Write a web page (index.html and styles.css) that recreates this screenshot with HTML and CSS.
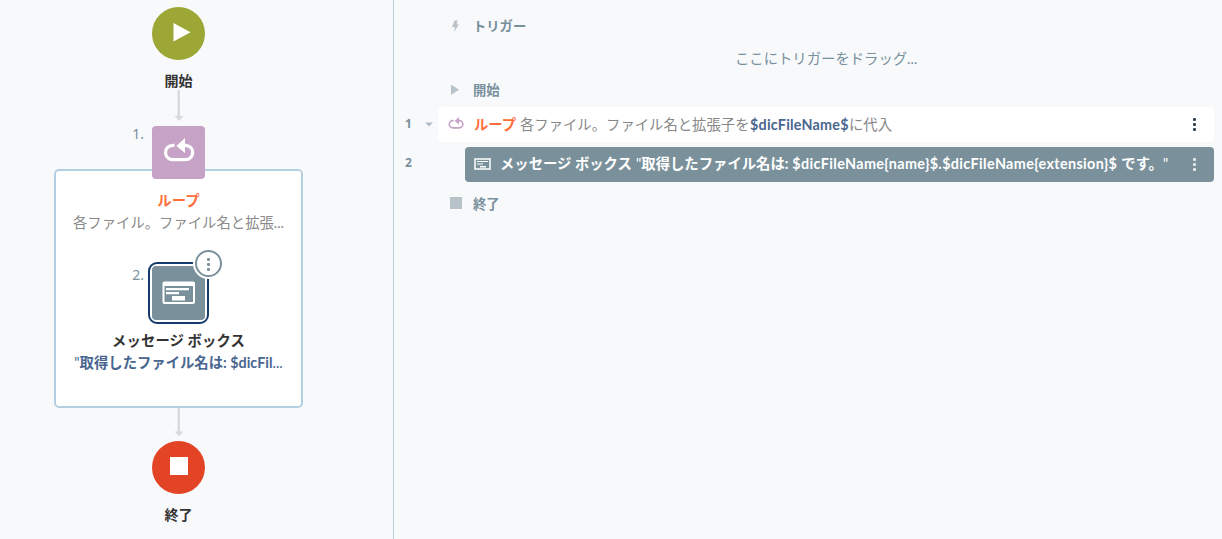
FILE: index.html
```html
<!DOCTYPE html>
<html lang="ja">
<head>
<meta charset="utf-8">
<title>フロー</title>
<link rel="stylesheet" href="styles.css">
</head>
<body>
<svg class="defs" width="0" height="0">
  <symbol id="loop" viewBox="0 0 32 26">
    <path d="M11.500 7.300H9.700a7.200 7.200 0 0 0 0 14.400h12.800a7.200 7.200 0 0 0 0-14.400H20" fill="none" stroke="currentColor" stroke-width="3.200"/>
    <path d="M13.300 8 22 0v15z" fill="currentColor"/>
  </symbol>
</svg>
<main class="app">
  <section class="diagram">
    <div class="flow">
      <div class="circle start"><svg width="53" height="53"><path d="M21.500 16v18.500l17-9.300z" fill="#fff"/></svg></div>
      <div class="caption">開始</div>
      <svg class="arrow" width="10" height="31"><path d="M3.500 0h2.500v26h3.500L5 31 .5 26h3z" fill="#d8dadc"/></svg>
      <div class="tile loop"><span class="num">1.</span><svg width="32" height="26"><use href="#loop"/></svg></div>
      <div class="group">
        <div class="title orange"><span>ループ</span></div>
        <div class="desc"><span class="d1">各ファイル。ファイル名と拡張...</span></div>
        <div class="selected">
          <span class="num">2.</span>
          <div class="tile message"><svg width="33" height="24"><rect x="1.500" y="1.500" width="30.500" height="20.500" rx="1" fill="none" stroke="#fff" stroke-width="2"/><path d="M1 1h31v4H1zM4 7h23v2.300H4zM4 11h13v2.300H4zM10 15h13v4.500H10z" fill="#fff"/></svg></div>
          <div class="menu"><i></i><i></i><i></i></div>
        </div>
        <div class="title"><span>メッセージ ボックス</span></div>
        <div class="desc var"><span class="q">"</span><span>取得したファイル名は:</span> <span>$dicFil</span><span class="q">...</span></div>
      </div>
      <svg class="arrow lower" width="10" height="28"><path d="M3.500 0h2.500v23.500h3.500L5 28 .5 23.500h3z" fill="#d8dadc"/></svg>
      <div class="circle stop"><svg width="53" height="53"><path d="M18 16h18v18H18z" fill="#fff"/></svg></div>
      <div class="caption end">終了</div>
    </div>
  </section>
  <section class="list">
    <div class="section trigger"><svg width="12" height="14"><path d="M5.500 1.500h3L7.800 5.500H10L5 13l1-5H3z" fill="#b8c4c9"/></svg><span>トリガー</span></div>
    <div class="hint"><span>ここにトリガーをドラッグ...</span></div>
    <div class="section begin"><svg width="12" height="14"><path d="M2 1.500v10.500l8-5.200z" fill="#b8c4c9"/></svg><span>開始</span></div>
    <div class="line first">
      <b class="line-number">1</b>
      <svg class="caret" width="8" height="5"><path d="M0 .5h8L4 4.500z" fill="#b2bec5"/></svg>
      <div class="row white">
        <svg class="loop-small" width="16" height="13"><use href="#loop"/></svg>
        <span class="t1">ループ</span><span class="t2">各ファイル。ファイル名と拡張子を</span><span class="t3">$dicFileName$</span><span class="t4">に代入</span>
        <div class="dots"><i></i><i></i><i></i></div>
      </div>
    </div>
    <div class="line second">
      <b class="line-number">2</b>
      <div class="row gray">
        <svg class="msg-small" width="17" height="12"><path d="M1 1h15v10H1z" fill="none" stroke="#fff" stroke-width="1.500"/><path d="M3 3h11v1H3zM3 5.500h6v1H3zM6 8h6v1.500H6z" fill="#fff"/></svg>
        <span class="m1">メッセージ ボックス</span><span class="q">"</span><span class="m2">取得したファイル名は:</span><span class="m3">$dicFileName{name}$.$dicFileName{extension}$</span><span class="m4">です。</span><span class="q">"</span>
        <div class="dots"><i></i><i></i><i></i></div>
      </div>
    </div>
    <div class="section finish"><svg width="12" height="12"><path d="M0 0h12v12H0z" fill="#b8c4c9"/></svg><span>終了</span></div>
  </section>
</main>
</body>
</html>
```
FILE: styles.css
```css
* { box-sizing: border-box; }
body { margin: 0; background: #f8f9fb; font: 14.35px/22px Lato, "Noto Sans CJK JP", sans-serif; color: #333; overflow: hidden; }
svg { display: block; flex: none; }
.defs { position: absolute; }
.app { display: flex; width: 1222px; height: 539px; }
.diagram { width: 394px; flex: none; border-right: 1px solid #b9cddb; padding: 7px 0 0 54px; }
.flow { width: 249px; display: flex; flex-direction: column; align-items: center; }
.circle { width: 53px; height: 53px; border-radius: 50%; flex: none; }
.start { background: #9ca735; }
.stop { background: #e34426; margin-top: 5px; }
.caption { height: 22px; margin-top: 9px; line-height: 24px; font-size: 14px; font-weight: bold; }
.arrow { margin: -1px 0 5px; }
.arrow.lower { margin: 0; }
.tile { width: 53px; height: 53px; border-radius: 4px; display: flex; align-items: center; justify-content: center; flex: none; color: #fff; }
.loop { background: #c5a2c6; position: relative; z-index: 1; padding-bottom: 4px; }
.num { position: absolute; right: 62px; top: -3px; font: 14px/22px "Noto Sans", sans-serif; color: #78909c; }
.loop .num { right: 61px; }
.group { width: 249px; height: 239px; margin-top: -10px; border: 2px solid #b5cfe2; border-radius: 5px; background: #fff; display: flex; flex-direction: column; align-items: center; padding-top: 18px; flex: none; }
.title { font-weight: bold; height: 22px; line-height: 24px; white-space: nowrap; }
.title span { letter-spacing: .1px; }
.orange { color: #ff6f3c; }
.desc { height: 22px; line-height: 24px; color: #8a8a8a; white-space: nowrap; }
.selected { width: 61px; height: 62px; border: 2px solid #163a6b; border-radius: 9px; margin: 29px 0 5px; padding: 2px; position: relative; flex: none; }
.selected .num { top: 0; right: 63px; }
.message { background: #7a919b; height: 54px; }
.menu { position: absolute; width: 27px; height: 27px; right: -15px; top: -14px; border: 2px solid #7a919b; border-radius: 50%; background: #fff; box-shadow: 0 0 0 2px #fff; display: flex; flex-direction: column; align-items: center; justify-content: center; gap: 2px; padding-top: 2px; }
.menu i { width: 3px; height: 3px; background: #7a919b; border-radius: 1px; }
.var { color: #49668f; font-weight: bold; }
.q { font-weight: normal; }
.list { flex: 1; padding: 15px 8px 0 0; }
.section { display: flex; align-items: center; height: 22px; padding-left: 55px; gap: 12px; font-weight: bold; font-size: 13.3px; color: #78909c; white-space: nowrap; }
.hint { height: 22px; line-height: 24px; margin: 10px 0 10px; padding-left: 341px; color: #78909c; white-space: nowrap; }
.line { display: flex; height: 35px; margin-bottom: 5px; align-items: center; }
.first { margin-top: 6px; }
.line-number { width: 31px; padding: 0 0 2px 11px; font: bold 12px "Noto Sans", sans-serif; color: #78909c; }
.caret { margin-right: 5px; }
.row { height: 35px; flex: 1; display: flex; align-items: center; border-radius: 4px; white-space: nowrap; }
.white { background: #fff; padding-left: 10px; color: #888; }
.second .line-number { width: 71px; padding-bottom: 4px; }
.gray { background: #7a919b; color: #fff; font-weight: bold; padding-left: 9px; }
.gray > span { position: relative; top: -1px; }
.loop-small { color: #c5a2c6; margin-right: 10px; }
.loop-small, .msg-small { position: relative; top: -1px; }
.msg-small { margin-right: 9px; }
.t1, .t2, .t3, .m1, .m2, .m3 { flex: none; }
.t1 { width: 46px; color: #ff6f3c; font-weight: bold; }
.t2 { width: 230px; }
.t3 { width: 99px; color: #49668f; font-weight: bold; letter-spacing: .22px; }
.m1 { width: 136px; }
.m2 { width: 151px; }
.m3 { width: 329px; letter-spacing: .37px; }
.dots { margin-left: auto; margin-right: 18px; display: flex; flex-direction: column; gap: 2px; }
.dots i { width: 3px; height: 3px; border-radius: 1px; background: #345; }
.gray .dots i { background: #e3e8ea; }
.finish { margin-top: 10px; gap: 11px; padding-left: 56px; }
.finish span { line-height: 20px; padding-top: 2px; }
```
